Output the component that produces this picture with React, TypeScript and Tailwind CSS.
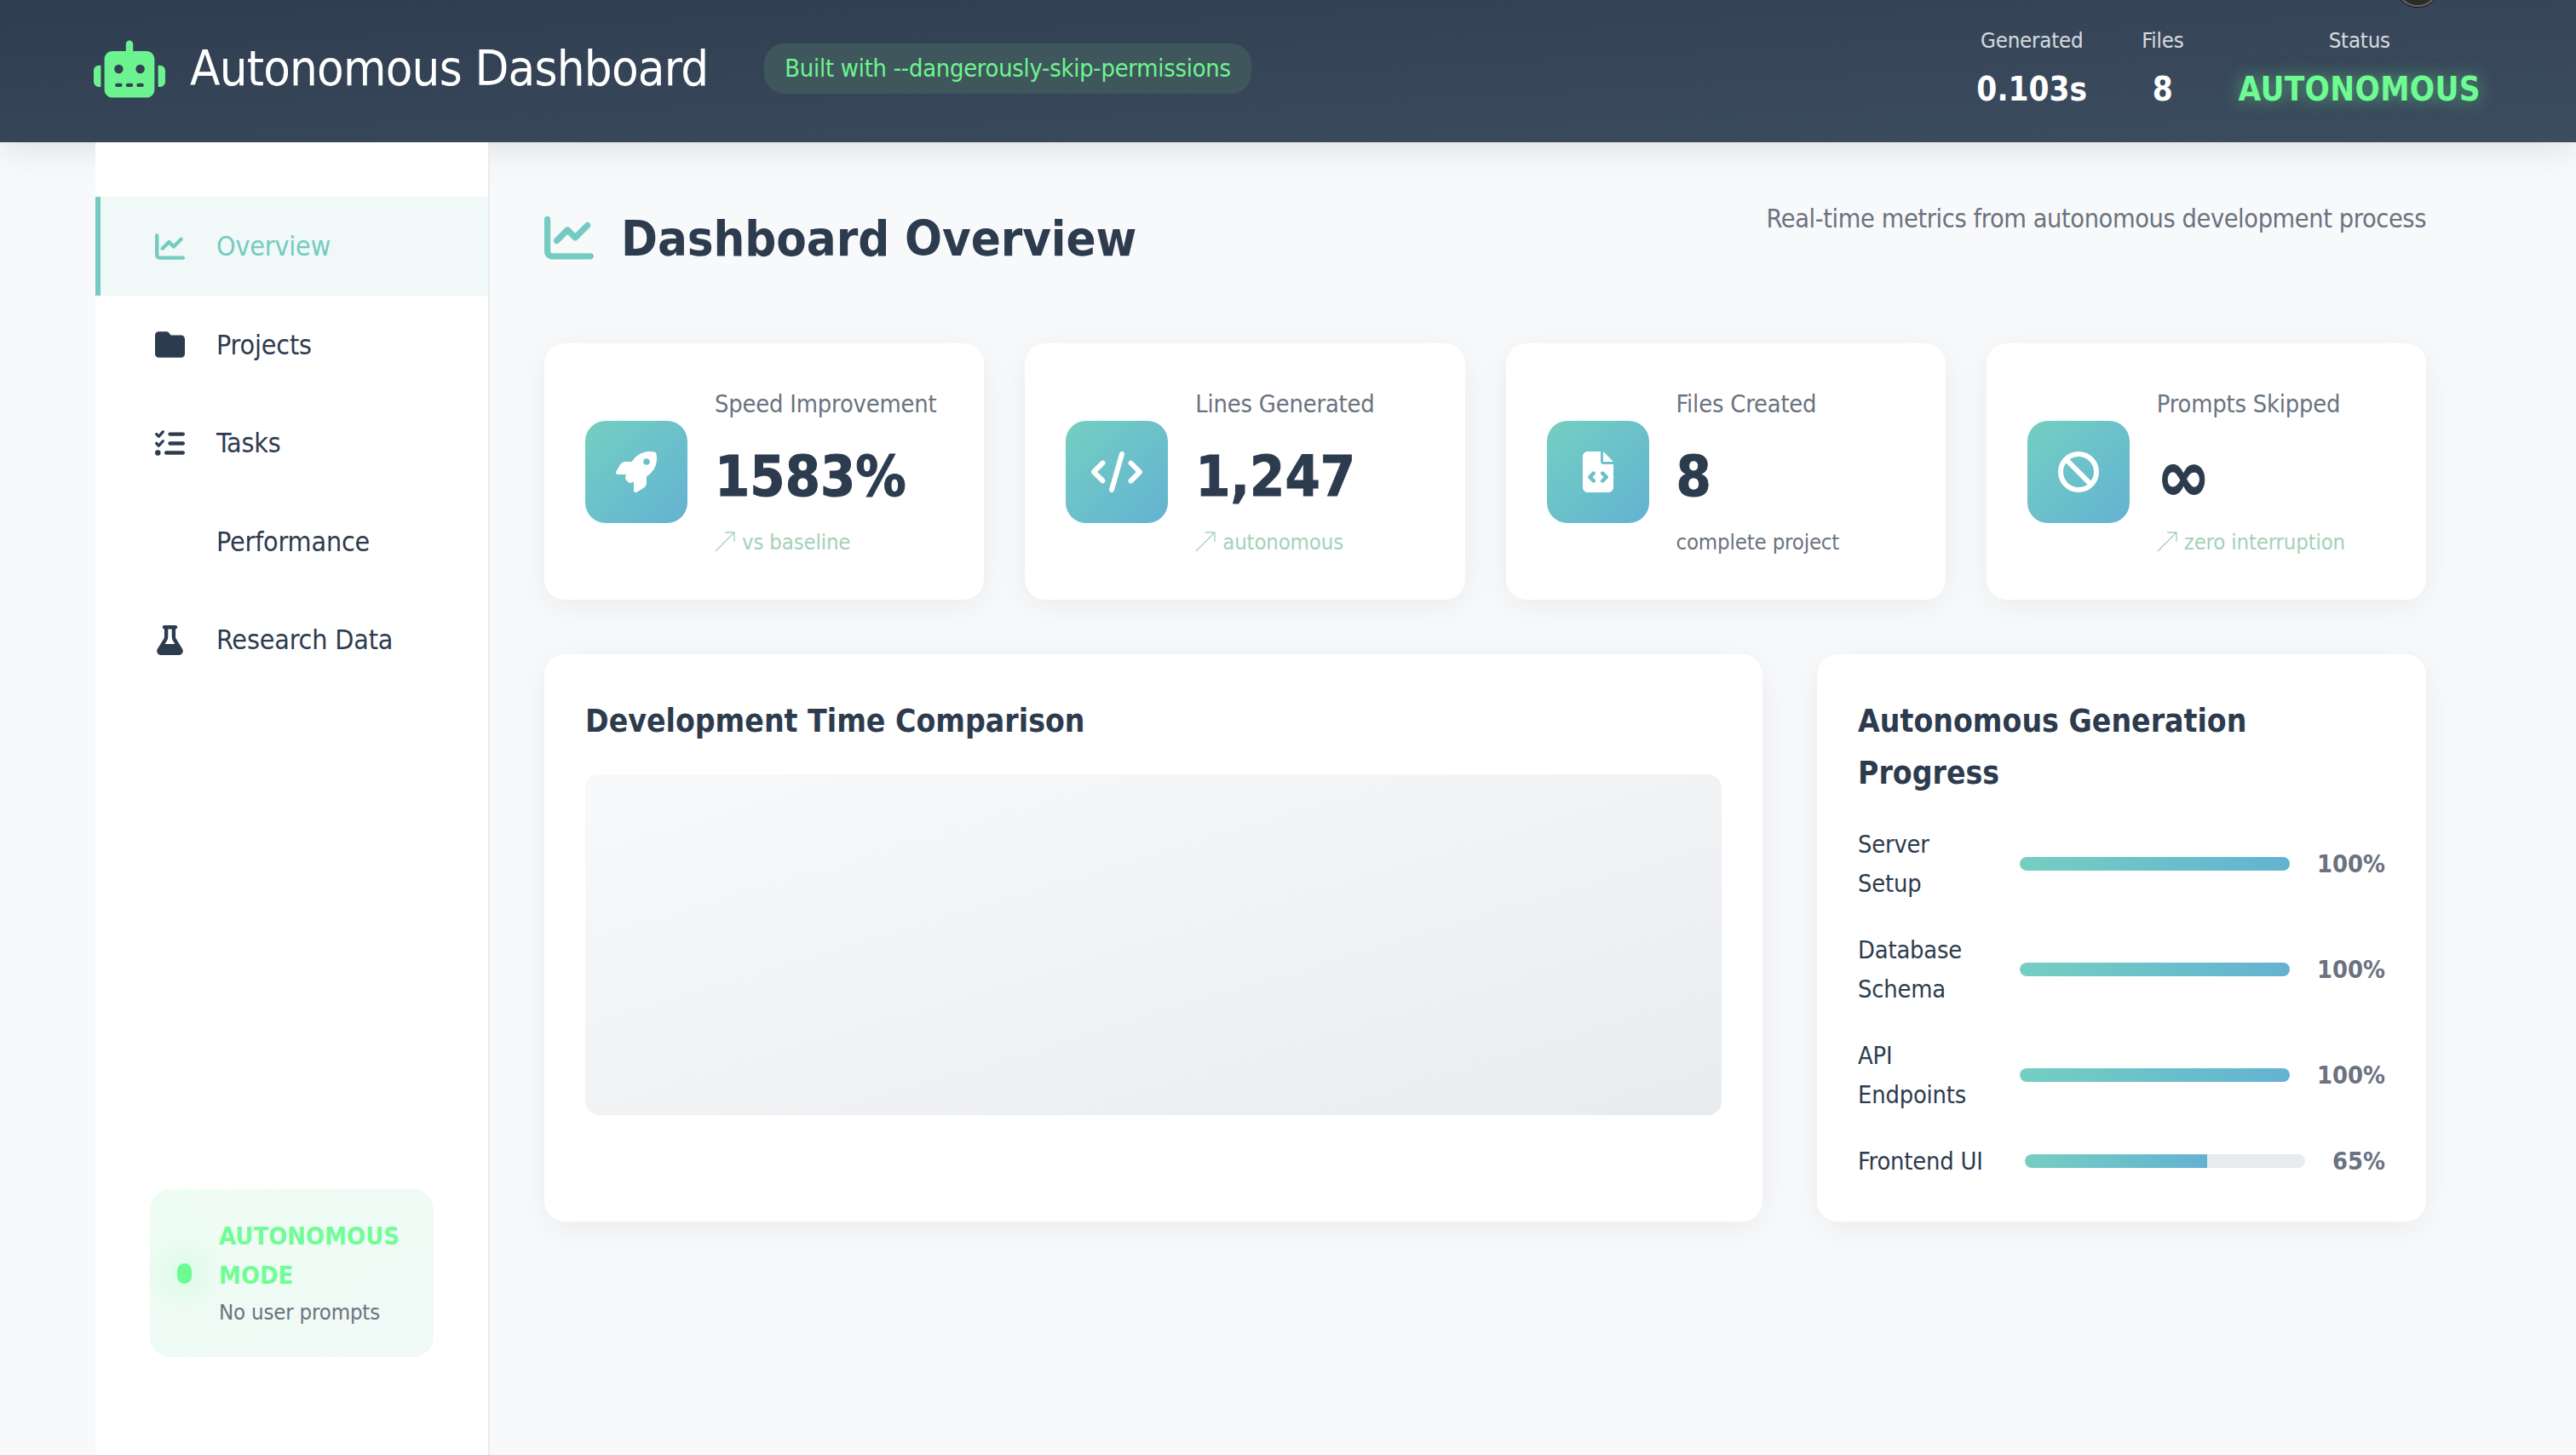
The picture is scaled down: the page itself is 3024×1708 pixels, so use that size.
import { FaRobot, FaChartLine, FaFolder, FaListCheck, FaFlask, FaRocket, FaCode, FaFileCode, FaBan } from 'react-icons/fa6';
import type { ReactNode } from 'react';

function TrendArrow() {
  return (
    <svg viewBox="0 0 24 24" className="inline-block w-[24px] h-[24px] mr-[8px] align-[-3px]" fill="none" stroke="#a3d1b8" strokeWidth="1.3">
      <path d="M1 23 L23 1 M12 1 H23 V12" />
    </svg>
  );
}

const navItems: { label: string; icon: ReactNode; active?: boolean }[] = [
  { label: 'Overview', icon: <FaChartLine size={35} />, active: true },
  { label: 'Projects', icon: <FaFolder size={35} /> },
  { label: 'Tasks', icon: <FaListCheck size={35} /> },
  { label: 'Performance', icon: null },
  { label: 'Research Data', icon: <FaFlask size={35} /> },
];

const stats = [
  { label: 'Speed Improvement', value: '1583%', valueSize: 'text-[66px]', sub: 'vs baseline', icon: <FaRocket size={48} />, trend: true },
  { label: 'Lines Generated', value: '1,247', valueSize: 'text-[66px]', sub: 'autonomous', icon: <FaCode size={60} />, trend: true },
  { label: 'Files Created', value: '8', valueSize: 'text-[66px]', sub: 'complete project', icon: <FaFileCode size={48} />, trend: false },
  { label: 'Prompts Skipped', value: '∞', valueSize: 'text-[84px]', sub: 'zero interruption', icon: <FaBan size={48} />, trend: true },
];

const progress = [
  { label: 'Server Setup', pct: 100, labelW: 'w-[158px]' },
  { label: 'Database Schema', pct: 100, labelW: 'w-[158px]' },
  { label: 'API Endpoints', pct: 100, labelW: 'w-[158px]' },
  { label: 'Frontend UI', pct: 65, labelW: 'w-[164px]' },
];

export default function App() {
  return (
    <div className="relative min-h-[1708px] bg-[#f8f9fa] font-['DejaVu_Sans',sans-serif] font-stretch-condensed tracking-[-0.012em] text-[#2d3b4e] overflow-hidden">
      <div className="absolute right-[160px] top-[-44px] w-[52px] h-[52px] rounded-full bg-[#2b2b2b] border-2 border-[#666] shadow-[0_0_0_1px_#111]"></div>

      <header className="h-[167px] pb-[6px] bg-linear-to-br from-[#2f3d50] to-[#3d4d60] shadow-[0_8px_40px_rgba(0,0,0,0.1)]">
        <div className="max-w-[2800px] mx-auto h-full flex items-center justify-between">
          <div className="flex items-center">
            <div className="flex items-center gap-[29px]">
              <FaRobot size={84} className="text-[#6cf28f] -ml-[2px]" />
              <h1 className="text-[57.6px] leading-[92px] font-normal tracking-[-0.8px] text-white">Autonomous Dashboard</h1>
            </div>
            <span className="ml-[66px] h-[59px] px-[24px] flex items-center rounded-[24px] bg-[#3f575c] text-[#6cf58f] text-[28.8px] tracking-[-0.25px]">
              Built with --dangerously-skip-permissions
            </span>
          </div>
          <div className="flex gap-[64px] text-center">
            <div>
              <div className="text-[25.6px] leading-[41px] text-white/80">Generated</div>
              <div className="text-[38.4px] leading-[61px] mt-[6px] font-bold tracking-normal text-white">0.103s</div>
            </div>
            <div>
              <div className="text-[25.6px] leading-[41px] text-white/80">Files</div>
              <div className="text-[38.4px] leading-[61px] mt-[6px] font-bold tracking-normal text-white">8</div>
            </div>
            <div>
              <div className="text-[25.6px] leading-[41px] text-white/80">Status</div>
              <div className="text-[38.4px] leading-[61px] mt-[6px] font-bold tracking-[0.3px] text-[#6dfb92] [text-shadow:0_0_20px_rgba(109,251,146,0.5)]">AUTONOMOUS</div>
            </div>
          </div>
        </div>
      </header>

      <div className="max-w-[2800px] mx-auto flex min-h-[1541px]">
        <aside className="w-[463px] shrink-0 bg-white border-r-2 border-[#e9ecef] pt-[64px] pb-[115px] flex flex-col">
          <nav className="flex flex-col">
            {navItems.map((item) => (
              <div
                key={item.label}
                className={
                  item.active
                    ? 'h-[115.5px] pt-[1px] flex items-center border-l-[6px] border-[#74cbc1] bg-[#f0f9f7] pl-[64px] text-[#74cbc1] text-[32px]'
                    : 'h-[115.5px] pt-[1px] flex items-center border-l-[6px] border-transparent pl-[64px] text-[#2d3b4e] text-[32px]'
                }
              >
                <span className="w-[72px] shrink-0">{item.icon}</span>
                {item.label}
              </div>
            ))}
          </nav>
          <div className="mt-auto mx-[64px] h-[197px] flex items-center gap-[32px] px-[32px] rounded-[24px] bg-linear-to-br from-[#eefdf3] to-[#f0f9f7]">
            <span className="w-[17px] h-[24px] shrink-0 rounded-full bg-[#6dfb92] shadow-[0_0_40px_#6dfb92]"></span>
            <div>
              <div className="text-[28.8px] leading-[46px] font-bold tracking-[0.1px] text-[#70fd95]">AUTONOMOUS MODE</div>
              <div className="text-[25.6px] leading-[41px] text-[#6b7280]">No user prompts</div>
            </div>
          </div>
        </aside>

        <main className="flex-1 p-[64px] min-w-0">
          <div className="flex justify-between items-start mb-[76px]">
            <h2 className="flex items-center gap-[32px] mt-[4px] text-[57.6px] leading-[92px] font-bold tracking-[-0.1px]">
              <FaChartLine size={58} className="text-[#74cbc1] -mt-[4px]" />
              Dashboard Overview
            </h2>
            <p className="text-[30.4px] leading-[51px] tracking-[-0.4px] text-[#6b7280]">Real-time metrics from autonomous development process</p>
          </div>

          <div className="grid grid-cols-4 gap-[48px] mb-[64px]">
            {stats.map((s) => (
              <div key={s.label} className="h-[301px] flex items-center gap-[32px] p-[48px] bg-white rounded-[24px] shadow-[0_8px_40px_rgba(0,0,0,0.06)]">
                <div className="w-[120px] h-[120px] shrink-0 flex items-center justify-center rounded-[24px] bg-linear-to-br from-[#74cfc1] to-[#64b2d2] text-white">
                  {s.icon}
                </div>
                <div>
                  <div className="text-[28.8px] leading-[46px] text-[#6b7280]">{s.label}</div>
                  <div className={`${s.valueSize} leading-[113px] mt-[6px] font-bold tracking-normal [-webkit-text-stroke:1px_#2d3b4e]`}>{s.value}</div>
                  <div className={s.trend ? 'text-[25.6px] leading-[41px] text-[#a3d1b8]' : 'text-[25.6px] leading-[41px] text-[#6b7280]'}>
                    {s.trend && <TrendArrow />}
                    {s.sub}
                  </div>
                </div>
              </div>
            ))}
          </div>

          <div className="grid grid-cols-[2fr_1fr] gap-[64px]">
            <section className="bg-white rounded-[24px] p-[48px] shadow-[0_8px_40px_rgba(0,0,0,0.06)]">
              <h3 className="text-[37px] leading-[61px] font-bold tracking-normal mb-[32px]">Development Time Comparison</h3>
              <div className="h-[400px] rounded-[16px] bg-linear-to-br from-[#f8f9fa] to-[#e9ecef]"></div>
            </section>
            <section className="bg-white rounded-[24px] p-[48px] shadow-[0_8px_40px_rgba(0,0,0,0.06)]">
              <h3 className="text-[37px] leading-[61px] font-bold tracking-normal mb-[30px]">Autonomous Generation Progress</h3>
              <div className="flex flex-col gap-[32px]">
                {progress.map((p) => (
                  <div key={p.label} className="flex items-center gap-[32px]">
                    <span className={`${p.labelW} shrink-0 text-[28.8px] leading-[46px]`}>{p.label}</span>
                    <div className="flex-1 h-[16px] rounded-full bg-[#e9ecef] overflow-hidden">
                      <div className="h-full rounded-l-full bg-linear-to-r from-[#74cfc1] to-[#64b2d2]" style={{ width: `${p.pct}%` }}></div>
                    </div>
                    <span className="shrink-0 pt-[2px] text-[28.8px] font-bold tracking-normal text-[#6b7280]">{p.pct}%</span>
                  </div>
                ))}
              </div>
            </section>
          </div>
        </main>
      </div>
    </div>
  );
}
